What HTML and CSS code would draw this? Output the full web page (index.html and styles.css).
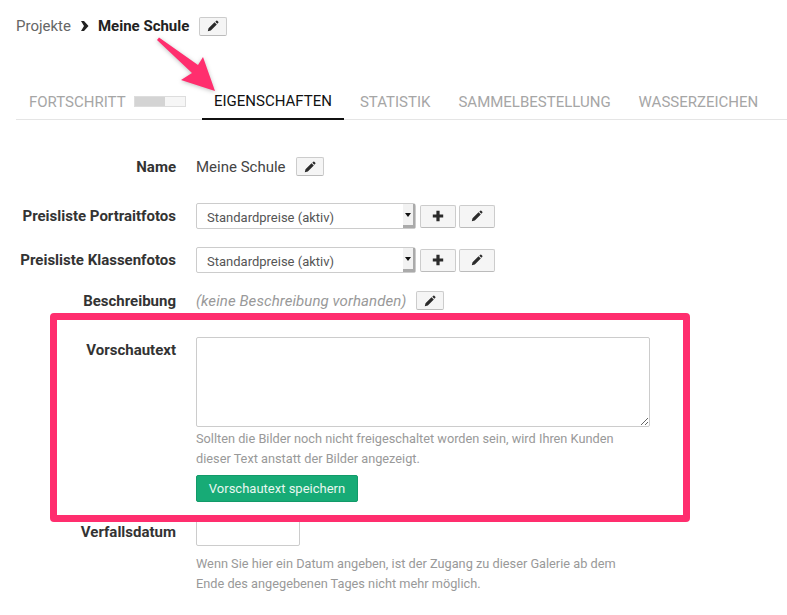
FILE: index.html
```html
<!DOCTYPE html>
<html lang="de">

<head>
  <meta charset="UTF-8">
  <meta name="viewport" content="width=device-width, initial-scale=1.0">
  <title>Meine Schule</title>
  <link rel="stylesheet" href="styles.css">
</head>

<body>
  <svg class="icon-defs" width="0" height="0">
    <symbol id="pencil" viewBox="0 0 12 12">
      <path d="M.8 11.2l.7-3 6-6 2.3 2.3-6 6zM8.3 1.7l1-1a.7.7 0 0 1 1 0l1 1a.7.7 0 0 1 0 1l-1 1z" />
    </symbol>
    <symbol id="plus" viewBox="0 0 12 12">
      <path d="M4.4.8h3.2v3.6h3.6v3.2H7.600v3.600H4.400V7.600H.8V4.400h3.600z" />
    </symbol>
  </svg>

  <div class="breadcrumb">
    <a class="crumb" href="#">Projekte</a>
    <svg class="crumb-sep" viewBox="0 0 9 10" width="9" height="10">
      <path d="M1 0h3l4.500 5L4 10H1l3-5z" />
    </svg>
    <strong class="crumb-current">Meine Schule</strong>
    <button class="btn btn-icon"><svg class="icon"><use href="#pencil" /></svg></button>
  </div>

  <ul class="tabs">
    <li class="tab">Fortschritt <span class="progress"><span class="progress-fill"></span></span></li>
    <li class="tab active">Eigenschaften</li>
    <li class="tab">Statistik</li>
    <li class="tab">Sammelbestellung</li>
    <li class="tab">Wasserzeichen</li>
  </ul>

  <form class="form">
    <div class="row row-name">
      <label class="label">Name</label>
      <div class="field">
        <span class="value">Meine Schule</span>
        <button type="button" class="btn btn-icon"><svg class="icon"><use href="#pencil" /></svg></button>
      </div>
    </div>

    <div class="row row-select">
      <label class="label">Preisliste Portraitfotos</label>
      <div class="field field-tight">
        <div class="select"><span class="select-text">Standardpreise (aktiv)</span><span class="select-arrow"></span></div>
        <button type="button" class="btn btn-tall"><svg class="icon"><use href="#plus" /></svg></button>
        <button type="button" class="btn btn-tall"><svg class="icon"><use href="#pencil" /></svg></button>
      </div>
    </div>

    <div class="row row-select">
      <label class="label">Preisliste Klassenfotos</label>
      <div class="field field-tight">
        <div class="select"><span class="select-text">Standardpreise (aktiv)</span><span class="select-arrow"></span></div>
        <button type="button" class="btn btn-tall"><svg class="icon"><use href="#plus" /></svg></button>
        <button type="button" class="btn btn-tall"><svg class="icon"><use href="#pencil" /></svg></button>
      </div>
    </div>

    <div class="row row-desc">
      <label class="label">Beschreibung</label>
      <div class="field">
        <em class="empty">(keine Beschreibung vorhanden)</em>
        <button type="button" class="btn btn-icon"><svg class="icon"><use href="#pencil" /></svg></button>
      </div>
    </div>

    <div class="row row-preview">
      <label class="label">Vorschautext</label>
      <div>
        <textarea class="textarea"></textarea>
        <p class="help">Sollten die Bilder noch nicht freigeschaltet worden sein, wird Ihren Kunden dieser Text anstatt der Bilder angezeigt.</p>
        <button type="button" class="btn-save">Vorschautext speichern</button>
      </div>
    </div>

    <div class="row row-date">
      <label class="label">Verfallsdatum</label>
      <div>
        <input class="input" type="text">
        <p class="help help-date">Wenn Sie hier ein Datum angeben, ist der Zugang zu dieser Galerie ab dem Ende des angegebenen Tages nicht mehr möglich.</p>
      </div>
    </div>
  </form>

  <!-- annotations on top of the screenshot -->
  <svg class="arrow" viewBox="0 0 70 70" width="70" height="70">
    <path d="M5 3.500L44 31l5-8 12 34-34-11 11-7L3 6z" />
  </svg>
  <div class="frame"></div>
</body>

</html>
```

FILE: styles.css
```css
* {
  box-sizing: border-box;
}
body {
  position: relative;
  margin: 0;
  padding-left: 16px;
  font-family: Roboto, sans-serif;
  font-size: 15px;
  color: #444;
  background-color: #fff;
  overflow: hidden;
}
.icon-defs {
  position: absolute;
}
.icon {
  display: block;
  width: 12px;
  height: 12px;
  margin: 0 auto;
  fill: #2b2b2b;
}

/* breadcrumb */
.breadcrumb {
  display: flex;
  align-items: center;
  height: 20px;
  margin-top: 16px;
}
.crumb {
  color: #666;
  text-decoration: none;
}
.crumb-sep {
  margin: 0 9px;
  fill: #222;
}
.crumb-current {
  color: #222;
  font-weight: 700;
}
.breadcrumb .btn-icon {
  margin-left: 10px;
}

/* buttons */
.btn {
  padding: 0;
  background-color: #f5f5f5;
  border: 1px solid #ccc;
  border-bottom-color: #bbb;
  border-radius: 2px;
  cursor: pointer;
}
.btn-icon {
  width: 28px;
  height: 19px;
}
.btn-tall {
  width: 36px;
  height: 23px;
}
.btn-save {
  display: block;
  width: 162px;
  height: 27px;
  padding: 0;
  font-family: inherit;
  font-size: 13px;
  color: #e8f7f0;
  background-color: #17ab76;
  border: 1px solid #129a69;
  border-radius: 2px;
  cursor: pointer;
}

/* tabs */
.tabs {
  display: flex;
  gap: 4px;
  height: 37px;
  margin: 47px 0 0;
  padding: 0 0 0 1px;
  list-style: none;
  border-bottom: 1px solid #e5e5e5;
}
.tab {
  display: flex;
  align-items: center;
  height: 37px;
  padding: 0 12px;
  color: #a6a6a6;
  text-transform: uppercase;
}
.tab.active {
  color: #111;
  border-bottom: 2px solid #111;
}
.progress {
  display: block;
  width: 52px;
  height: 11px;
  margin-left: 8.4px;
  background-color: #f6f6f6;
  border: 1px solid #ddd;
}
.progress-fill {
  display: block;
  width: 60%;
  height: 100%;
  background-color: #d4d4d4;
}

/* form rows */
.row {
  display: grid;
  grid-template-columns: 160px 1fr;
  column-gap: 20px;
}
.label {
  color: #333;
  font-weight: 700;
  text-align: right;
  white-space: nowrap;
}
.field {
  display: flex;
  align-items: center;
  gap: 10px;
}
.field-tight {
  gap: 3px;
}
.row-name {
  align-items: center;
  height: 19px;
  margin-top: 37px;
}
.row-select {
  margin-top: 27px;
}
.row-select + .row-select {
  margin-top: 18px;
}
.row-select .label {
  padding-top: 4px;
}
.row-desc {
  align-items: center;
  height: 19px;
  margin-top: 18px;
}
.row-preview {
  margin-top: 27px;
}
.row-preview .label {
  padding-top: 4px;
}
.row-date {
  margin-top: 18px;
}
.row-date .label {
  padding-top: 3px;
}
.value {
  color: #444;
}
.empty {
  color: #999;
  letter-spacing: 0.08px;
}

/* select look */
.select {
  display: flex;
  width: 220px;
  height: 26px;
  margin-right: 1px;
  background-color: #fff;
  border: 1px solid #ccc;
  border-radius: 2px 3px 2px 2px;
}
.select-text {
  flex: 1;
  padding: 6px 0 0 10px;
  font-size: 13px;
  line-height: 15px;
  color: #555;
}
.select-arrow {
  position: relative;
  width: 12px;
  background-color: #f2f2f2;
  border-right: 2px solid #aaa;
  border-bottom: 3px solid #aaa;
}
.select-arrow::after {
  content: "";
  position: absolute;
  top: 9px;
  left: 2px;
  border-top: 4px solid #111;
  border-left: 3px solid transparent;
  border-right: 3px solid transparent;
}

/* inputs */
.textarea {
  display: block;
  width: 454px;
  height: 90px;
  margin: 0;
  border: 1px solid #ccc;
  border-radius: 2px;
}
.input {
  display: block;
  width: 104px;
  height: 26px;
  border: 1px solid #ccc;
  border-radius: 2px;
}
.help {
  width: 430px;
  margin: 2px 0 6px;
  font-size: 12.75px;
  line-height: 20px;
  color: #999;
}
.help-date {
  margin-top: 8px;
}

/* pink annotations */
.arrow {
  position: absolute;
  top: 34px;
  left: 154px;
  fill: #ff2e6e;
  filter: drop-shadow(0 1px 2px rgba(0, 0, 0, 0.25));
}
.frame {
  position: absolute;
  top: 313px;
  left: 50px;
  width: 640px;
  height: 209px;
  border: 7px solid #ff2e6e;
  border-radius: 4px;
}
```
